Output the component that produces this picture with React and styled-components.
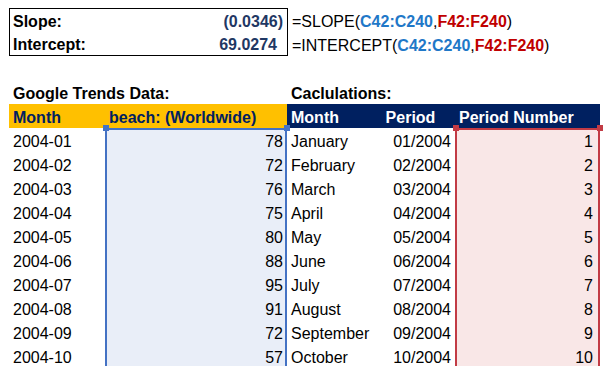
import styled, { createGlobalStyle } from 'styled-components';

const GlobalStyle = createGlobalStyle`
  body {
    margin: 0;
    background: #ffffff;
    font-family: "Liberation Sans", Arial, sans-serif;
    font-size: 16px;
    color: #000000;
  }
`;

const NAVY = '#002060';
const ORANGE = '#FFC000';
const TONES = {
  blue: { line: '#4472C4', fill: '#E9EEF8' },
  red: { line: '#C23B45', fill: '#F9E7E7' },
};

const Sheet = styled.div`
  display: grid;
  grid-template-columns: 96px 182px 79px 89px 145px;
  grid-auto-rows: 24px;
  padding: 8px 0 0 9px;
  width: max-content;
`;

// Excel sits text low in the row, so the line box starts a little down
const Cell = styled.div`
  grid-column: ${(p) => p.$span || 'auto'};
  box-sizing: border-box;
  line-height: 20px;
  padding: 4px ${(p) => p.$padRight || 4}px 0 4px;
  white-space: nowrap;
  text-align: ${(p) => p.$align || 'left'};
  font-weight: ${(p) => (p.$bold ? 700 : 400)};
  color: ${(p) => p.$color || 'inherit'};
  background: ${(p) => p.$bg || 'transparent'};
`;

const SummaryBox = styled.div`
  grid-column: 1 / 3;
  grid-row: 1 / 3;
  display: grid;
  grid-template-columns: 96px 1fr;
  grid-template-rows: 1fr 1fr;
  border: 1px solid #000000;
  margin-right: -1px;
  font-weight: 700;
`;

const SummaryLabel = styled.div`
  line-height: 20px;
  padding: 3px 0 0 3px;
`;

const SummaryValue = styled.div`
  line-height: 20px;
  padding-top: 3px;
  text-align: right;
  padding-right: ${(p) => p.$padRight}px;
  color: #1F3864;
`;

const Formula = styled.div`
  grid-column: 3 / 6;
  line-height: 20px;
  padding: 4px 0 0 5px;
  white-space: nowrap;
`;

const Ref = styled.span`
  font-weight: 700;
  color: ${(p) => (p.$tone === 'red' ? '#C00000' : '#1F78C8')};
`;

const Spacer = styled.div`
  grid-column: 1 / 6;
`;

const SelCell = styled(Cell)`
  position: relative;
  text-align: right;
  background: ${(p) => TONES[p.$tone].fill};
  box-shadow:
    inset 2px 0 0 ${(p) => TONES[p.$tone].line},
    inset -2px 0 0 ${(p) => TONES[p.$tone].line}
    ${(p) => (p.$first ? `, inset 0 2px 0 ${TONES[p.$tone].line}` : '')};

  ${(p) =>
    p.$first &&
    `
    &::before,
    &::after {
      content: '';
      position: absolute;
      top: -3px;
      width: 6px;
      height: 6px;
      background: ${TONES[p.$tone].line};
    }
    &::before { left: -2px; }
    &::after { right: -3px; }
  `}
`;

const rows = [
  ['2004-01', 78, 'January', '01/2004', 1],
  ['2004-02', 72, 'February', '02/2004', 2],
  ['2004-03', 76, 'March', '03/2004', 3],
  ['2004-04', 75, 'April', '04/2004', 4],
  ['2004-05', 80, 'May', '05/2004', 5],
  ['2004-06', 88, 'June', '06/2004', 6],
  ['2004-07', 95, 'July', '07/2004', 7],
  ['2004-08', 91, 'August', '08/2004', 8],
  ['2004-09', 72, 'September', '09/2004', 9],
  ['2004-10', 57, 'October', '10/2004', 10],
];

const FormulaLine = ({ name }) => (
  <Formula>
    ={name}(<Ref $tone="blue">C42:C240</Ref>,<Ref $tone="red">F42:F240</Ref>)
  </Formula>
);

const App = () => {
  return (
    <>
      <GlobalStyle />
      <Sheet>
        <SummaryBox>
          <SummaryLabel>Slope:</SummaryLabel>
          <SummaryValue $padRight={4}>(0.0346)</SummaryValue>
          <SummaryLabel>Intercept:</SummaryLabel>
          <SummaryValue $padRight={10}>69.0274</SummaryValue>
        </SummaryBox>
        <FormulaLine name="SLOPE" />
        <FormulaLine name="INTERCEPT" />
        <Spacer />

        <Cell $span="1 / 3" $bold>Google Trends Data:</Cell>
        <Cell $span="3 / 6" $bold>Caclulations:</Cell>

        <Cell $bold $bg={ORANGE} $color={NAVY}>Month</Cell>
        <Cell $bold $bg={ORANGE} $color={NAVY} $padRight={0}>beach: (Worldwide)</Cell>
        <Cell $bold $bg={NAVY} $color="#ffffff">Month</Cell>
        <Cell $bold $bg={NAVY} $color="#ffffff" $align="center">Period</Cell>
        <Cell $bold $bg={NAVY} $color="#ffffff">Period Number</Cell>

        {rows.map(([month, value, name, period, num], i) => (
          <div key={month} style={{ display: 'contents' }}>
            <Cell>{month}</Cell>
            <SelCell $tone="blue" $first={i === 0}>{value}</SelCell>
            <Cell>{name}</Cell>
            <Cell $align="right">{period}</Cell>
            <SelCell $tone="red" $first={i === 0} $padRight={7}>{num}</SelCell>
          </div>
        ))}
      </Sheet>
    </>
  );
};

export default App;
